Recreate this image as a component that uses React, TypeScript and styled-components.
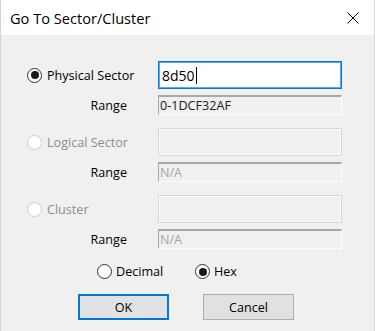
import styled, { createGlobalStyle } from 'styled-components'

const GlobalStyle = createGlobalStyle`
	html, body {
		margin: 0;
		padding: 0;
		background: #f0f0f0;
	}
	body {
		font-family: 'Open Sans', 'Noto Sans', sans-serif;
	}
`

const Window = styled.div`
	display: flex;
	flex-direction: column;
	width: 375px;
	height: 331px;
	box-sizing: border-box;
	background: #f0f0f0;
	border-left: 1px solid #d4d4d4;
	border-right: 1px solid #d4d4d4;
	overflow: hidden;
`

const TitleBar = styled.div`
	display: flex;
	align-items: center;
	justify-content: space-between;
	height: 35px;
	flex-shrink: 0;
	padding: 0 15px 0 9px;
	background: #fff;
	font-size: 14.6px;
	color: #000;
`

const CloseIcon = styled.svg`
	width: 12px;
	height: 12px;
	margin-top: 1px;
`

const Body = styled.div`
	display: flex;
	flex-direction: column;
	padding: 26px 0 0 26px;
`

const Groups = styled.div`
	display: flex;
	flex-direction: column;
	gap: 13px;
`

const Group = styled.div`
	display: grid;
	grid-template-columns: 131px 184px;
	row-gap: 6px;
	align-items: center;
`

const RadioLabel = styled.label<{ $disabled?: boolean }>`
	display: flex;
	align-items: center;
	gap: 5px;
	font-size: 12.6px;
	color: ${(p) => (p.$disabled ? '#8d8d8d' : '#000')};
`

const Circle = styled.span<{ $checked?: boolean; $disabled?: boolean }>`
	display: inline-flex;
	align-items: center;
	justify-content: center;
	width: 13px;
	height: 13px;
	flex-shrink: 0;
	border-radius: 50%;
	border: 1px solid ${(p) => (p.$disabled ? '#cccccc' : '#333')};
	background: #fff;

	&::after {
		content: '';
		display: ${(p) => (p.$checked ? 'block' : 'none')};
		width: 8px;
		height: 8px;
		border-radius: 50%;
		background: #1a1a1a;
	}
`

const RangeLabel = styled.span`
	justify-self: end;
	padding-right: 31px;
	font-size: 12.6px;
	color: #000;
`

const TextBox = styled.div<{ $active?: boolean }>`
	display: flex;
	align-items: center;
	height: 28px;
	box-sizing: border-box;
	padding: 0 3px;
	font-size: 14px;
	color: #000;
	background: ${(p) => (p.$active ? '#fff' : '#f0f0f0')};
	border: 1px solid ${(p) => (p.$active ? '#0078d7' : '#d6d6d6')};
	box-shadow: ${(p) => (p.$active ? 'inset 0 0 0 1px #5fa8e8' : 'inset 0 0 0 1px #fafafa')};
`

const Caret = styled.span`
	display: inline-block;
	width: 1px;
	height: 17px;
	margin-left: 1px;
	background: #000;
`

const RangeBox = styled.div<{ $muted?: boolean }>`
	display: flex;
	align-items: center;
	height: 20px;
	box-sizing: border-box;
	padding-left: 1px;
	font-size: 12.6px;
	color: ${(p) => (p.$muted ? '#a6a6a6' : '#222')};
	background: #f0f0f0;
	border-top: 2px solid #a8a8a8;
	border-left: 1px solid #a8a8a8;
	border-bottom: 1px solid #fbfbfb;
	border-right: 1px solid #fbfbfb;
`

const FormatRow = styled.div`
	display: flex;
	align-items: center;
	height: 15px;
	margin: 15px 0 0 70px;
`

const FormatOption = styled(RadioLabel)`
	width: 98px;
	gap: 4px;
`

const Buttons = styled.div`
	display: flex;
	gap: 34px;
	margin: 15px 0 0 51px;
`

const Button = styled.button<{ $primary?: boolean }>`
	width: 91px;
	height: 26px;
	box-sizing: border-box;
	padding: 0;
	font-family: inherit;
	font-size: 12.6px;
	color: #000;
	background: #e1e1e1;
	border: ${(p) => (p.$primary ? '2px solid #0078d7' : '1px solid #adadad')};
`

type Field = {
	label: string
	value: string
	range: string
	enabled: boolean
	checked: boolean
}

const fields: Field[] = [
	{ label: 'Physical Sector', value: '8d50', range: '0-1DCF32AF', enabled: true, checked: true },
	{ label: 'Logical Sector', value: '', range: 'N/A', enabled: false, checked: false },
	{ label: 'Cluster', value: '', range: 'N/A', enabled: false, checked: false },
]

const App = () => {
	return (
		<>
			<GlobalStyle />
			<Window>
				<TitleBar>
					<span>Go To Sector/Cluster</span>
					<CloseIcon viewBox="0 0 12 12">
						<path d="M0.5 0.5 L11.5 11.5 M11.5 0.5 L0.5 11.5" stroke="#000" strokeWidth="1" />
					</CloseIcon>
				</TitleBar>
				<Body>
					<Groups>
						{fields.map((f) => (
							<Group key={f.label}>
								<RadioLabel $disabled={!f.enabled}>
									<Circle $checked={f.checked} $disabled={!f.enabled} />
									{f.label}
								</RadioLabel>
								<TextBox $active={f.enabled}>
									{f.value}
									{f.enabled && <Caret />}
								</TextBox>
								<RangeLabel>Range</RangeLabel>
								<RangeBox $muted={!f.enabled}>{f.range}</RangeBox>
							</Group>
						))}
					</Groups>
					<FormatRow>
						<FormatOption>
							<Circle />
							Decimal
						</FormatOption>
						<FormatOption>
							<Circle $checked />
							Hex
						</FormatOption>
					</FormatRow>
					<Buttons>
						<Button $primary>OK</Button>
						<Button>Cancel</Button>
					</Buttons>
				</Body>
			</Window>
		</>
	)
}

export default App
